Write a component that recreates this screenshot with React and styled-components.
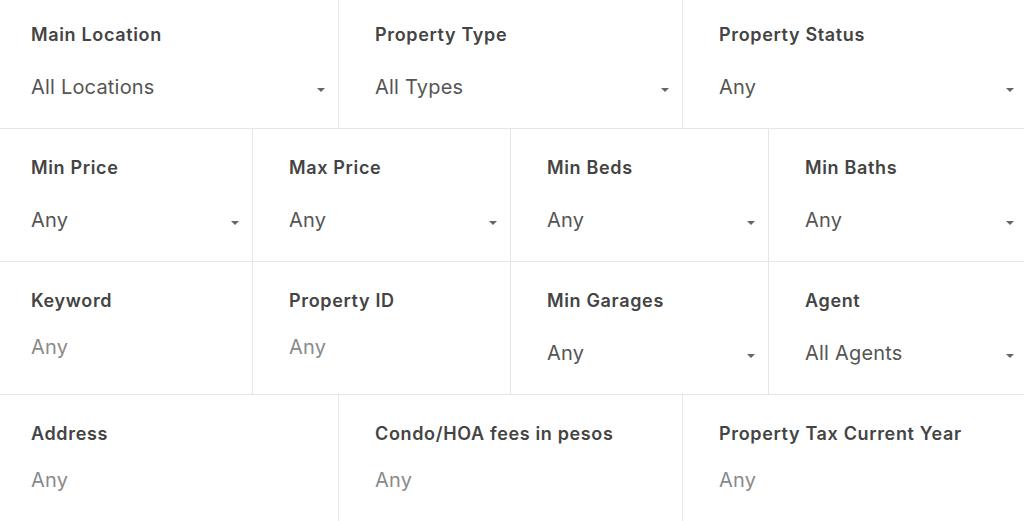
import React from "react";
import styled, { createGlobalStyle } from "styled-components";

const Global = createGlobalStyle`
  html, body { margin: 0; padding: 0; background: #fff; overflow: hidden; }
  body { font-family: Inter, "Open Sans", sans-serif; }
`;

const Form = styled.div`
  width: 1032px;
  margin: -4px 0 0 -5px;
  display: flex;
  flex-direction: column;
`;

const Row = styled.div`
  display: grid;
  grid-template-columns: repeat(${(p) => p.$cols}, 1fr);
  border-bottom: 1px solid #e6e6e6;
  height: 133px;
  box-sizing: border-box;
`;

const Cell = styled.div`
  padding: 29px 36px 0 36px;
  border-right: 1px solid #e6e6e6;
  box-sizing: border-box;
  display: flex;
  flex-direction: column;
  &:last-child { border-right: none; }
`;

const Label = styled.div`
  font-size: 18px;
  font-weight: 600;
  letter-spacing: 0.65px;
  color: #444;
  line-height: 20px;
  white-space: nowrap;
`;

const Select = styled.div`
  margin-top: 30px;
  margin-right: -23px;
  display: flex;
  align-items: center;
  justify-content: space-between;
  font-size: 20px;
  letter-spacing: 0.2px;
  color: #555;
  line-height: 24px;
`;

const Input = styled.div`
  margin-top: 24px;
  font-size: 20px;
  letter-spacing: 0.2px;
  color: #8a8a8a;
  line-height: 24px;
`;

const Caret = styled.span`
  width: 0;
  height: 0;
  border-left: 4px solid transparent;
  border-right: 4px solid transparent;
  border-top: 4px solid #666;
  margin-top: 6px;
`;

const rows = [
  [
    { label: "Main Location", value: "All Locations", select: true },
    { label: "Property Type", value: "All Types", select: true },
    { label: "Property Status", value: "Any", select: true },
  ],
  [
    { label: "Min Price", value: "Any", select: true },
    { label: "Max Price", value: "Any", select: true },
    { label: "Min Beds", value: "Any", select: true },
    { label: "Min Baths", value: "Any", select: true },
  ],
  [
    { label: "Keyword", value: "Any" },
    { label: "Property ID", value: "Any" },
    { label: "Min Garages", value: "Any", select: true },
    { label: "Agent", value: "All Agents", select: true },
  ],
  [
    { label: "Address", value: "Any" },
    { label: "Condo/HOA fees in pesos", value: "Any" },
    { label: "Property Tax Current Year", value: "Any" },
  ],
];

export default function App() {
  return (
    <>
      <Global />
      <Form>
        {rows.map((r, i) => (
          <Row key={i} $cols={r.length}>
            {r.map((f) => (
              <Cell key={f.label}>
                <Label>{f.label}</Label>
                {f.select ? (
                  <Select>
                    <span>{f.value}</span>
                    <Caret />
                  </Select>
                ) : (
                  <Input>{f.value}</Input>
                )}
              </Cell>
            ))}
          </Row>
        ))}
      </Form>
    </>
  );
}
